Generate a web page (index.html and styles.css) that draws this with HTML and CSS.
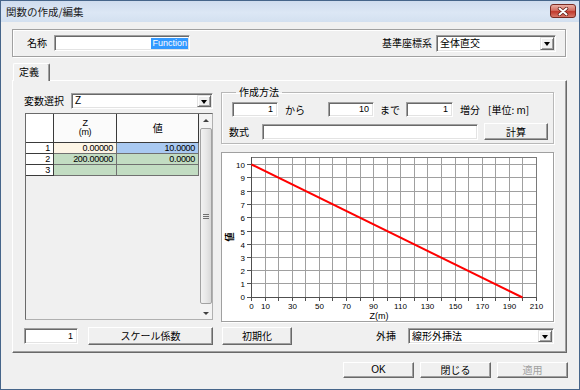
FILE: index.html
```html
<!DOCTYPE html>
<html lang="ja">
<head>
<meta charset="utf-8">
<title>関数の作成/編集</title>
<link rel="stylesheet" href="styles.css">
</head>
<body>
<div class="window">
  <div class="titlebar">
    <span class="title">関数の作成/編集</span>
    <span class="close"><svg width="12" height="9" viewBox="0 0 12 9"><path d="M2.5 1.5 L9.5 7.5 M9.5 1.5 L2.5 7.5" stroke="#5a1a12" stroke-width="3.4" stroke-linecap="round"/><path d="M2.5 1.5 L9.5 7.5 M9.5 1.5 L2.5 7.5" stroke="#fff" stroke-width="2" stroke-linecap="round"/></svg></span>
  </div>
  <div class="body">
    <div class="namebox">
      <span class="name-lbl">名称</span>
      <div class="edit name-edit"><span class="sel">Function</span></div>
      <span class="spacer"></span>
      <span class="coord-lbl">基準座標系</span>
      <div class="combo coord-combo"><span class="combo-text">全体直交</span><span class="drop"></span></div>
    </div>
    <div class="tabs"><div class="tab">定義</div></div>
    <div class="panel">
      <div class="left">
        <div class="var-row">
          <span class="var-lbl">変数選択</span>
          <div class="combo var-combo"><span class="combo-text latin">Z</span><span class="drop"></span></div>
        </div>
        <div class="sheet">
          <div class="cells">
            <div class="c hd rh"></div>
            <div class="c hd"><span>Z</span><span>(m)</span></div>
            <div class="c hd kanji">値</div>
            <div class="c rh">1</div><div class="c cream">0.00000</div><div class="c blue">10.0000</div>
            <div class="c rh">2</div><div class="c green">200.00000</div><div class="c green">0.0000</div>
            <div class="c rh">3</div><div class="c green"></div><div class="c green"></div>
          </div>
          <div class="vsb">
            <div class="sb-btn"><span class="arr-up"></span></div>
            <div class="sb-track"><div class="thumb"><i></i><i></i><i></i></div></div>
            <div class="sb-btn"><span class="arr-down"></span></div>
          </div>
        </div>
      </div>
      <div class="right">
        <fieldset class="method">
          <legend>作成方法</legend>
          <div class="m-row1">
            <div class="edit num-edit w46">1</div><span class="kara">から</span>
            <div class="edit num-edit w46">10</div><span class="made">まで</span>
            <div class="edit num-edit w47">1</div><span class="zoubun">増分</span><span class="tani">[単位: m]</span>
          </div>
          <div class="m-row2">
            <span class="formula-lbl">数式</span>
            <div class="edit formula"></div>
            <div class="btn calc">計算</div>
          </div>
        </fieldset>
        <div class="chart">
          <svg width="331" height="168" viewBox="0 0 331 168">
            <path d="M43.5 4V144M56.5 4V144M70.5 4V144M83.5 4V144M97.5 4V144M110.5 4V144M124.5 4V144M138.5 4V144M151.5 4V144M165.5 4V144M178.5 4V144M192.5 4V144M205.5 4V144M219.5 4V144M233.5 4V144M246.5 4V144M260.5 4V144M273.5 4V144M287.5 4V144M300.5 4V144" stroke="#a0a0a0" stroke-width="1" fill="none"/>
            <path d="M29 130.5H314M29 117.5H314M29 104.5H314M29 91.5H314M29 78.5H314M29 64.5H314M29 51.5H314M29 38.5H314M29 24.5H314M29 11.5H314" stroke="#a0a0a0" stroke-width="1" fill="none"/>
            <path d="M29 4.5H314.5M314.5 4V145" stroke="#7a7a7a" stroke-width="1" fill="none"/>
            <path d="M29.5 4V148M25 144.5H315" stroke="#505050" stroke-width="1" fill="none"/>
            <path d="M43.5 144V148M56.5 144V148M70.5 144V148M83.5 144V148M97.5 144V148M110.5 144V148M124.5 144V148M138.5 144V148M151.5 144V148M165.5 144V148M178.5 144V148M192.5 144V148M205.5 144V148M219.5 144V148M233.5 144V148M246.5 144V148M260.5 144V148M273.5 144V148M287.5 144V148M300.5 144V148M314.5 144V148M25 130.5H29M25 117.5H29M25 104.5H29M25 91.5H29M25 78.5H29M25 64.5H29M25 51.5H29M25 38.5H29M25 24.5H29M25 11.5H29" stroke="#505050" stroke-width="1" fill="none"/>
            <path d="M29.5 11.5L300.5 144.5" stroke="#ff0000" stroke-width="2" fill="none"/>
            <g class="ylab" text-anchor="end">
              <text x="23" y="147">0</text><text x="23" y="134">1</text><text x="23" y="121">2</text><text x="23" y="108">3</text><text x="23" y="95">4</text><text x="23" y="82">5</text><text x="23" y="68">6</text><text x="23" y="55">7</text><text x="23" y="42">8</text><text x="23" y="28">9</text><text x="23" y="15">10</text>
            </g>
            <g class="xlab" text-anchor="middle">
              <text x="29.5" y="156">0</text><text x="43.5" y="156">10</text><text x="70.5" y="156">30</text><text x="97.5" y="156">50</text><text x="124.5" y="156">70</text><text x="151.5" y="156">90</text><text x="178.5" y="156">110</text><text x="205.5" y="156">130</text><text x="233.5" y="156">150</text><text x="260.5" y="156">170</text><text x="287.5" y="156">190</text><text x="314.5" y="156">210</text>
            </g>
            <text class="ytitle" transform="translate(7 84) rotate(-90)" text-anchor="middle" dominant-baseline="central">値</text>
            <text class="xtitle" x="157" y="166" text-anchor="middle">Z(m)</text>
          </svg>
        </div>
      </div>
      <div class="bl">
        <div class="edit num-edit scale-edit">1</div>
        <div class="btn scale-btn">スケール係数</div>
      </div>
      <div class="br">
        <div class="btn init-btn">初期化</div>
        <span class="spacer"></span>
        <span class="extra-lbl">外挿</span>
        <div class="combo extra-combo"><span class="combo-text">線形外挿法</span><span class="drop"></span></div>
      </div>
    </div>
    <div class="buttons">
      <div class="btn dlg-btn latin">OK</div>
      <div class="btn dlg-btn">閉じる</div>
      <div class="btn dlg-btn disabled">適用</div>
    </div>
  </div>
</div>
</body>
</html>
```

FILE: styles.css
```css
* { box-sizing: border-box; }
html, body { margin: 0; padding: 0; }
body {
  width: 580px;
  height: 390px;
  overflow: hidden;
  background: #f0f0f0;
  font-family: "Noto Sans CJK JP", "Liberation Sans", sans-serif;
  font-size: 10px;
  line-height: 12px;
  color: #000;
}
.latin { font-family: "Liberation Sans", "Noto Sans CJK JP", sans-serif; }

.window {
  width: 580px;
  height: 390px;
  border: 1px solid #46658a;
  background: #f0f0f0;
  display: flex;
  flex-direction: column;
}
.titlebar {
  flex: none;
  height: 21px;
  display: flex;
  align-items: flex-start;
  justify-content: space-between;
  padding: 0 3px 0 5px;
  background: linear-gradient(#cfdcee, #dce7f5 55%, #d3e0f0);
}
.title { line-height: 21px; font-size: 10.5px; color: #1a1a1a; }
.close {
  margin-top: 3px;
  width: 26px;
  height: 14px;
  border: 1px solid #7a2b22;
  border-radius: 3px;
  background: linear-gradient(#eab0a4, #d46e62 45%, #c13a2d 55%, #d8786a);
  display: flex;
  align-items: center;
  justify-content: center;
}
.close svg { display: block; }

.body {
  flex: 1;
  display: flex;
  flex-direction: column;
  padding: 7px 12px 0 11px;
}

/* common controls */
.edit {
  background: #fff;
  border-top: 1px solid #a0a0a0;
  border-left: 1px solid #a0a0a0;
  border-right: 1px solid #fff;
  border-bottom: 1px solid #fff;
  box-shadow: inset 1px 1px 0 #696969, inset -1px -1px 0 #e3e3e3;
}
.num-edit {
  height: 15px;
  font-family: "Liberation Sans", sans-serif;
  font-size: 9px;
  line-height: 13px;
  text-align: right;
  padding-right: 4px;
}
.btn {
  background: #f0f0f0;
  border-top: 1px solid #fff;
  border-left: 1px solid #fff;
  border-right: 1px solid #696969;
  border-bottom: 1px solid #696969;
  box-shadow: inset -1px -1px 0 #a0a0a0;
  display: flex;
  align-items: center;
  justify-content: center;
}
.combo {
  display: flex;
  background: #fff;
  border-top: 1px solid #a0a0a0;
  border-left: 1px solid #a0a0a0;
  border-right: 1px solid #fff;
  border-bottom: 1px solid #fff;
  box-shadow: inset 1px 1px 0 #696969, inset -1px -1px 0 #e3e3e3;
  padding: 1px;
}
.combo-text { flex: 1; padding-left: 2px; line-height: 12px; }
.drop {
  width: 14px;
  background: #f0f0f0;
  border-top: 1px solid #e3e3e3;
  border-left: 1px solid #e3e3e3;
  border-right: 1px solid #696969;
  border-bottom: 1px solid #696969;
  box-shadow: inset 1px 1px 0 #fff, inset -1px -1px 0 #a0a0a0;
  display: flex;
  align-items: center;
  justify-content: center;
}
.drop::after {
  content: "";
  border-left: 3px solid transparent;
  border-right: 3px solid transparent;
  border-top: 4px solid #000;
  margin-top: 1px;
}
.spacer { flex: 1; }

/* name group */
.namebox {
  flex: none;
  width: 554px;
  height: 28px;
  border: 1px solid #a0a0a0;
  box-shadow: inset 1px 1px 0 #fff, 1px 1px 0 #fff;
  display: flex;
  align-items: center;
  padding: 0 9px 0 14px;
}
.name-lbl { width: 20px; margin-right: 7px; }
.name-edit {
  width: 136px;
  height: 16px;
  display: flex;
  justify-content: flex-end;
  align-items: center;
  padding-right: 1px;
}
.sel {
  background: #3399ff;
  color: #fff;
  font-family: "Liberation Sans", sans-serif;
  font-size: 9px;
  line-height: 11px;
  padding: 0 1px;
}
.coord-lbl { margin-right: 4px; }
.coord-combo { width: 120px; height: 17px; }

/* tabs */
.tabs { flex: none; margin-top: 6px; height: 18px; margin-bottom: -1px; display: flex; padding-left: 1px; }
.tab {
  position: relative;
  z-index: 1;
  width: 37px;
  height: 18px;
  background: #f0f0f0;
  border-top: 1px solid #fff;
  border-left: 1px solid #fff;
  border-right: 1px solid #696969;
  box-shadow: inset -1px 0 0 #a0a0a0;
  border-radius: 2px 2px 0 0;
  padding-left: 5px;
  line-height: 16px;
}

.panel {
  flex: none;
  width: 555px;
  height: 273px;
  border-top: 1px solid #fff;
  border-left: 1px solid #fff;
  border-right: 1px solid #696969;
  border-bottom: 1px solid #696969;
  box-shadow: inset -1px -1px 0 #a0a0a0;
  padding: 5px 12px 7px 11px;
  display: grid;
  grid-template-columns: 189px 333px;
  grid-template-rows: 236px 18px;
  column-gap: 8px;
  row-gap: 5px;
}

/* left column */
.left { padding-top: 7px; display: flex; flex-direction: column; }
.var-row { display: flex; height: 16px; align-items: center; }
.var-lbl { width: 47px; }
.var-combo { width: 142px; height: 16px; }
.sheet {
  margin-top: 4px;
  margin-left: 1px;
  width: 188px;
  height: 207px;
  border: 1px solid #6a6a6a;
  border-right-color: #b0b0b0;
  border-bottom-color: #b0b0b0;
  background: #f0f0f0;
  display: flex;
}
.cells {
  width: 173px;
  display: grid;
  grid-template-columns: 28px 63px 82px;
  grid-template-rows: 29px 11px 11px 11px;
  align-content: start;
}
.c {
  border-right: 1px solid #707070;
  border-bottom: 1px solid #707070;
  font-family: "Liberation Sans", sans-serif;
  font-size: 9px;
  line-height: 10px;
  text-align: right;
  padding-right: 3px;
  letter-spacing: -0.3px;
}
.hd {
  background: #fbfbfb;
  border-color: #3a3a3a;
  display: flex;
  flex-direction: column;
  justify-content: center;
  align-items: center;
  padding: 0;
  line-height: 9px;
}
.hd.kanji { font-family: "Noto Sans CJK JP", sans-serif; font-size: 10px; line-height: 12px; }
.rh { background: #fff; border-color: #3a3a3a; }
.cream { background: #fdf5e6; }
.blue { background: #a9c9f1; }
.green { background: #c2dcc2; }

.vsb {
  width: 12px;
  margin-left: 1px;
  display: flex;
  flex-direction: column;
  background: #f3f3f3;
}
.sb-btn { height: 12px; display: flex; align-items: center; justify-content: center; }
.arr-up { border-left: 3px solid transparent; border-right: 3px solid transparent; border-bottom: 3px solid #404040; }
.arr-down { border-left: 3px solid transparent; border-right: 3px solid transparent; border-top: 3px solid #404040; }
.sb-track { flex: 1; padding: 2px 0 3px; display: flex; }
.thumb {
  flex: 1;
  border: 1px solid #a2a2a2;
  border-radius: 2px;
  background: linear-gradient(to right, #f2f2f2, #e8e8e8 50%, #d8d8d8);
  display: flex;
  flex-direction: column;
  align-items: center;
  justify-content: center;
  gap: 1px;
}
.thumb i { display: block; width: 6px; height: 1px; background: #707070; }

/* right column */
.right { display: flex; flex-direction: column; min-width: 0; }
.method {
  margin: 0;
  min-width: 0;
  height: 58px;
  border: 1px solid #b8b8b8;
  box-shadow: inset 1px 1px 0 #fff, 1px 1px 0 #fff;
  padding: 4px 5px 3px 7px;
}
.method legend { padding: 0 3px; margin-left: 7px; line-height: 12px; }
.m-row1 { display: flex; align-items: center; height: 15px; margin-left: 3px; }
.w46 { width: 46px; }
.w47 { width: 47px; }
.kara { margin-left: 7px; width: 43px; }
.made { margin-left: 6px; width: 26px; }
.zoubun { margin-left: 7px; width: 28px; }
.tani { white-space: nowrap; }
.m-row2 { display: flex; align-items: center; height: 17px; margin-top: 6px; }
.formula-lbl { width: 33px; }
.formula { width: 216px; height: 16px; }
.calc { width: 64px; height: 17px; margin-left: 6px; }

.chart {
  margin-top: 8px;
  height: 170px;
  border: 1px solid #a0a0a0;
  box-shadow: 1px 1px 0 #fff;
  background: #fff;
}
.chart svg { display: block; }
.ylab text, .xlab text { font-family: "Liberation Sans", sans-serif; font-size: 8px; fill: #000; }
.ytitle { font-family: "Noto Sans CJK JP", sans-serif; font-size: 9px; font-weight: bold; }
.xtitle { font-family: "Liberation Sans", sans-serif; font-size: 9px; }

/* bottom row */
.bl { display: flex; align-items: center; }
.scale-edit { width: 54px; height: 16px; line-height: 14px; }
.scale-btn { width: 125px; height: 18px; margin-left: 10px; }
.br { display: flex; align-items: center; }
.init-btn { width: 70px; height: 18px; margin-left: 1px; }
.extra-lbl { margin-right: 12px; }
.extra-combo { width: 146px; height: 16px; }

/* dialog buttons */
.buttons { display: flex; justify-content: flex-end; gap: 6px; margin-top: 9px; margin-right: -1px; }
.dlg-btn { width: 71px; height: 16px; }
.disabled { color: #a0a0a0; }
```
